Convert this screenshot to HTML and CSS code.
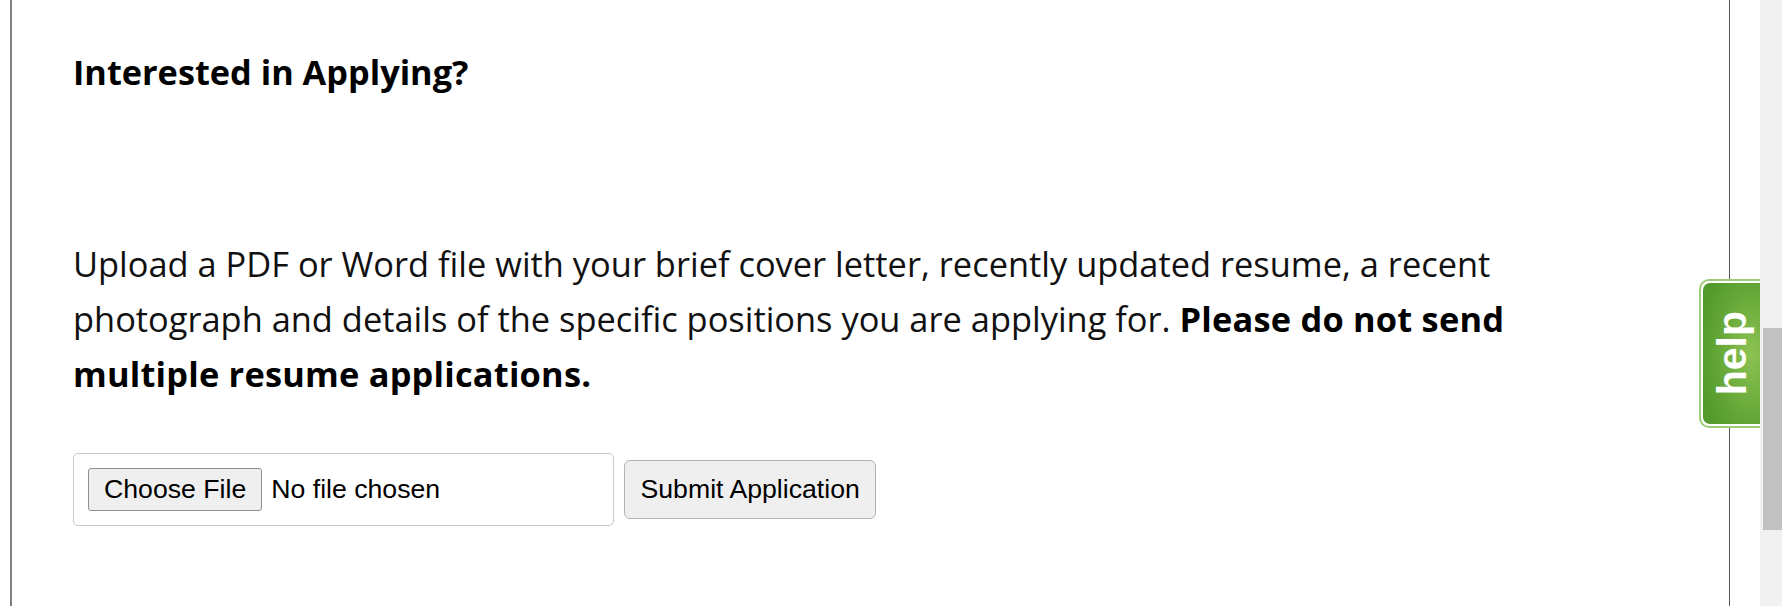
FILE: index.html
```html
<!DOCTYPE html>
<html lang="en">
<head>
<meta charset="utf-8">
<title>Interested in Applying?</title>
<link rel="stylesheet" href="styles.css">
</head>
<body>
<div class="page">
  <main class="main">
    <section class="card">
      <h2 class="title">Interested in Applying?</h2>
      <p class="intro">Upload a PDF or Word file with your brief cover letter, recently updated resume, a recent photograph and details of the specific positions you are applying for. <strong>Please do not send multiple resume applications.</strong></p>
      <form class="apply-form">
        <input class="file-input" type="file" name="resume">
        <button class="submit" type="button">Submit Application</button>
      </form>
    </section>
  </main>
  <div class="scrollbar"><div class="thumb"></div></div>
</div>
<a class="help-tab" href="#"><span class="help-inner"><span class="help-text">help</span></span></a>
</body>
</html>
```
FILE: styles.css
```css
html, body {
  margin: 0;
  padding: 0;
  height: 606px;
  overflow: hidden;
  background: #fff;
}
.page {
  display: flex;
  height: 606px;
}
.main {
  flex: 1;
  min-width: 0;
  height: 606px;
}
.card {
  margin-left: 10px;
  width: 1720px;
  box-sizing: border-box;
  height: 606px;
  border-left: 2px solid #808080;
  border-right: 1px solid #555;
  padding: 52px 0 0 61px;
  font-family: "Open Sans", "Noto Sans", sans-serif;
  color: #111;
}
.title {
  margin: 0;
  font-size: 34.3px;
  line-height: 40px;
  font-weight: 700;
  color: #000;
}
.intro {
  margin: 144px 0 0;
  width: 1490px;
  font-size: 34.4px;
  line-height: 55px;
}
.intro strong {
  font-weight: 700;
  color: #000;
  letter-spacing: 0.2px;
}
.apply-form {
  margin-top: 52px;
  display: flex;
  align-items: center;
  gap: 10px;
}
.file-input {
  width: 541px;
  box-sizing: border-box;
  border: 1px solid #c8c8c8;
  border-radius: 5px;
  padding: 14px;
  font-family: "Liberation Sans", Arial, sans-serif;
  font-size: 26.67px;
  color: #000;
  background: #fff;
}
.file-input::file-selector-button {
  font: inherit;
  color: #000;
  padding: 5px 15px;
  margin-right: 9px;
  border: 1px solid #8f8f8f;
  border-radius: 3px;
  background: #efefef;
}
.submit {
  font-family: "Liberation Sans", Arial, sans-serif;
  font-size: 26.67px;
  color: #000;
  padding: 13px 15.5px;
  border: 1px solid #b3b3b3;
  border-radius: 6px;
  background: #efefef;
}
.scrollbar {
  width: 22px;
  flex: none;
  height: 606px;
  background: #f1f1f1;
  padding-top: 328px;
  box-sizing: border-box;
}
.thumb {
  margin-left: 3px;
  width: 19px;
  height: 202px;
  background: #c1c1c1;
}
.help-tab {
  position: fixed;
  top: 279px;
  right: 22px;
  width: 61px;
  height: 149px;
  box-sizing: border-box;
  border: 2px solid #9dcc78;
  border-right: none;
  border-radius: 10px 0 0 10px;
  padding: 2px 0 2px 2px;
  background: #fff;
  text-decoration: none;
  display: flex;
}
.help-inner {
  flex: 1;
  border-radius: 7px 0 0 7px;
  background: radial-gradient(ellipse 90% 70% at 85% 50%, #8dc254 0%, #6aab3b 55%, #539a2c 100%);
  display: flex;
  align-items: center;
  padding-left: 9px;
}
.help-text {
  writing-mode: vertical-rl;
  transform: rotate(180deg);
  font-family: "Liberation Sans", Arial, sans-serif;
  font-weight: 700;
  font-size: 41px;
  line-height: 41px;
  color: #fff;
}
```
